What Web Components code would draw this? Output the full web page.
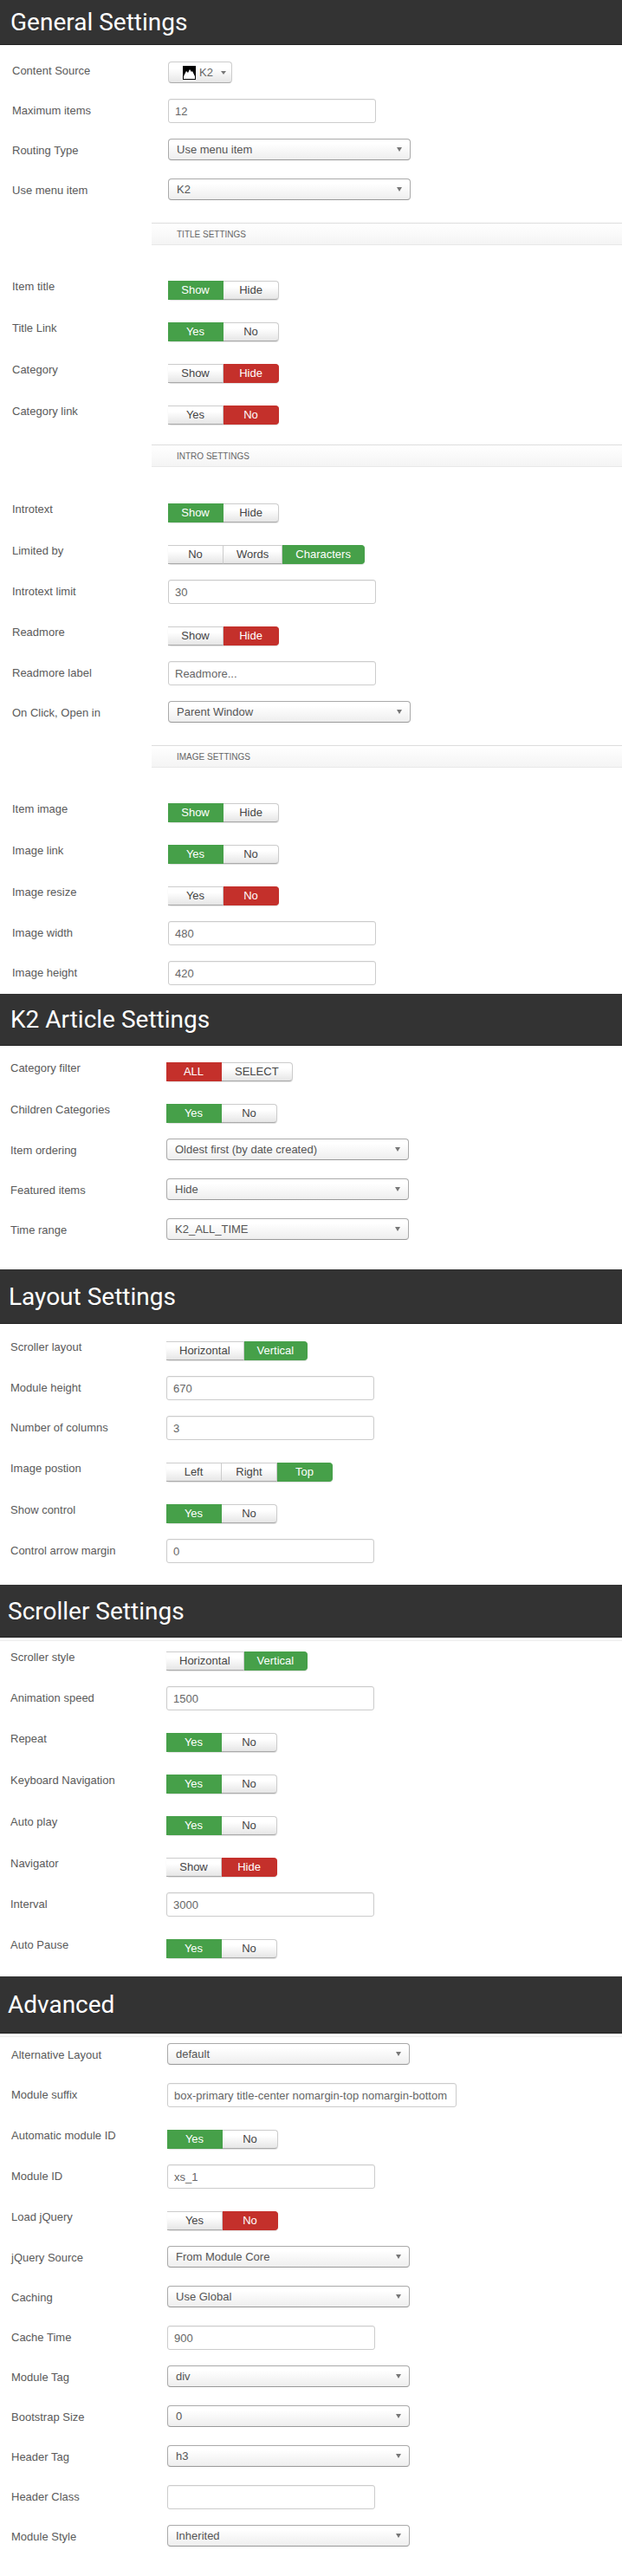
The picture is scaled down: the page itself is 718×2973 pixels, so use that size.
<!DOCTYPE html>
<html>
<head>
<meta charset="utf-8">
<title>Module settings</title>
<style>
  html, body { margin: 0; background: #fff; }
  body { font-family: "Liberation Sans", Arial, sans-serif; font-size: 13px; color: #555; width: 718px; height: 2973px; overflow: hidden; }
</style>
</head>
<body>

<settings-section heading="General Settings" bar="52" inset="14" title-x="12">
  <form-row label="Content Source" gap="19" kind="picker"><source-picker>K2</source-picker></form-row>
  <form-row label="Maximum items" gap="18" kind="field"><text-field>12</text-field></form-row>
  <form-row label="Routing Type" gap="18" kind="select"><select-box>Use menu item</select-box></form-row>
  <form-row label="Use menu item" gap="21" kind="select"><select-box>K2</select-box></form-row>
  <group-band gap="26">TITLE SETTINGS</group-band>
  <form-row label="Item title" gap="41" kind="toggle"><seg-toggle options="Show|Hide" on="0" tone="green"></seg-toggle></form-row>
  <form-row label="Title Link" gap="26" kind="toggle"><seg-toggle options="Yes|No" on="0" tone="green"></seg-toggle></form-row>
  <form-row label="Category" gap="26" kind="toggle"><seg-toggle options="Show|Hide" on="1" tone="red"></seg-toggle></form-row>
  <form-row label="Category link" gap="26" kind="toggle"><seg-toggle options="Yes|No" on="1" tone="red"></seg-toggle></form-row>
  <group-band gap="23">INTRO SETTINGS</group-band>
  <form-row label="Introtext" gap="42" kind="toggle"><seg-toggle options="Show|Hide" on="0" tone="green"></seg-toggle></form-row>
  <form-row label="Limited by" gap="26" kind="toggle"><seg-toggle options="No|Words|Characters" on="2" tone="green"></seg-toggle></form-row>
  <form-row label="Introtext limit" gap="18" kind="field"><text-field>30</text-field></form-row>
  <form-row label="Readmore" gap="26" kind="toggle"><seg-toggle options="Show|Hide" on="1" tone="red"></seg-toggle></form-row>
  <form-row label="Readmore label" gap="18" kind="field"><text-field>Readmore...</text-field></form-row>
  <form-row label="On Click, Open in" gap="18" kind="select"><select-box>Parent Window</select-box></form-row>
  <group-band gap="26">IMAGE SETTINGS</group-band>
  <form-row label="Item image" gap="41" kind="toggle"><seg-toggle options="Show|Hide" on="0" tone="green"></seg-toggle></form-row>
  <form-row label="Image link" gap="26" kind="toggle"><seg-toggle options="Yes|No" on="0" tone="green"></seg-toggle></form-row>
  <form-row label="Image resize" gap="26" kind="toggle"><seg-toggle options="Yes|No" on="1" tone="red"></seg-toggle></form-row>
  <form-row label="Image width" gap="18" kind="field"><text-field>480</text-field></form-row>
  <form-row label="Image height" gap="18" kind="field"><text-field>420</text-field></form-row>
</settings-section>

<settings-section heading="K2 Article Settings" bar="60" inset="12" title-x="12" top="10">
  <form-row label="Category filter" gap="19" kind="toggle"><seg-toggle options="ALL|SELECT" on="0" tone="red"></seg-toggle></form-row>
  <form-row label="Children Categories" gap="26" kind="toggle"><seg-toggle options="Yes|No" on="0" tone="green"></seg-toggle></form-row>
  <form-row label="Item ordering" gap="18" kind="select"><select-box>Oldest first (by date created)</select-box></form-row>
  <form-row label="Featured items" gap="21" kind="select"><select-box>Hide</select-box></form-row>
  <form-row label="Time range" gap="21" kind="select"><select-box>K2_ALL_TIME</select-box></form-row>
</settings-section>

<settings-section heading="Layout Settings" bar="63" inset="12" title-x="10" top="34">
  <form-row label="Scroller layout" gap="20" kind="toggle"><seg-toggle options="Horizontal|Vertical" on="1" tone="green"></seg-toggle></form-row>
  <form-row label="Module height" gap="18" kind="field"><text-field>670</text-field></form-row>
  <form-row label="Number of columns" gap="18" kind="field"><text-field>3</text-field></form-row>
  <form-row label="Image postion" gap="26" kind="toggle"><seg-toggle options="Left|Right|Top" on="2" tone="green"></seg-toggle></form-row>
  <form-row label="Show control" gap="26" kind="toggle"><seg-toggle options="Yes|No" on="0" tone="green"></seg-toggle></form-row>
  <form-row label="Control arrow margin" gap="18" kind="field"><text-field>0</text-field></form-row>
</settings-section>

<settings-section heading="Scroller Settings" bar="61" inset="12" title-x="9" top="25" rule>
  <form-row label="Scroller style" gap="16" kind="toggle"><seg-toggle options="Horizontal|Vertical" on="1" tone="green"></seg-toggle></form-row>
  <form-row label="Animation speed" gap="18" kind="field"><text-field>1500</text-field></form-row>
  <form-row label="Repeat" gap="26" kind="toggle"><seg-toggle options="Yes|No" on="0" tone="green"></seg-toggle></form-row>
  <form-row label="Keyboard Navigation" gap="26" kind="toggle"><seg-toggle options="Yes|No" on="0" tone="green"></seg-toggle></form-row>
  <form-row label="Auto play" gap="26" kind="toggle"><seg-toggle options="Yes|No" on="0" tone="green"></seg-toggle></form-row>
  <form-row label="Navigator" gap="26" kind="toggle"><seg-toggle options="Show|Hide" on="1" tone="red"></seg-toggle></form-row>
  <form-row label="Interval" gap="18" kind="field"><text-field>3000</text-field></form-row>
  <form-row label="Auto Pause" gap="26" kind="toggle"><seg-toggle options="Yes|No" on="0" tone="green"></seg-toggle></form-row>
</settings-section>

<settings-section heading="Advanced" bar="66" inset="13" title-x="9" top="21" rule>
  <form-row label="Alternative Layout" gap="11" kind="select"><select-box>default</select-box></form-row>
  <form-row label="Module suffix" gap="21" kind="field"><text-field wide>box-primary title-center nomargin-top nomargin-bottom</text-field></form-row>
  <form-row label="Automatic module ID" gap="26" kind="toggle"><seg-toggle options="Yes|No" on="0" tone="green"></seg-toggle></form-row>
  <form-row label="Module ID" gap="18" kind="field"><text-field>xs_1</text-field></form-row>
  <form-row label="Load jQuery" gap="26" kind="toggle"><seg-toggle options="Yes|No" on="1" tone="red"></seg-toggle></form-row>
  <form-row label="jQuery Source" gap="18" kind="select"><select-box>From Module Core</select-box></form-row>
  <form-row label="Caching" gap="21" kind="select"><select-box>Use Global</select-box></form-row>
  <form-row label="Cache Time" gap="21" kind="field"><text-field>900</text-field></form-row>
  <form-row label="Module Tag" gap="18" kind="select"><select-box>div</select-box></form-row>
  <form-row label="Bootstrap Size" gap="21" kind="select"><select-box>0</select-box></form-row>
  <form-row label="Header Tag" gap="21" kind="select"><select-box>h3</select-box></form-row>
  <form-row label="Header Class" gap="21" kind="field"><text-field></text-field></form-row>
  <form-row label="Module Style" gap="18" kind="select"><select-box>Inherited</select-box></form-row>
</settings-section>

<script>
const BUTTON_FACE = "linear-gradient(#fff 30%, #e6e6e6)";

class SettingsSection extends HTMLElement {
  constructor() {
    super();
    this.attachShadow({ mode: "open" });
    const top = this.getAttribute("top") || 0;
    const bar = this.getAttribute("bar");
    const inset = this.getAttribute("inset");
    const titleX = this.getAttribute("title-x");
    this.shadowRoot.innerHTML = `
      <style>
        :host { display: block; padding-top: ${top}px; }
        header {
          display: flex;
          align-items: center;
          box-sizing: border-box;
          height: ${bar}px;
          padding-left: ${titleX}px;
          background: #333;
          border-bottom: 1px solid #222;
          color: #fff;
          font: 400 28px Roboto, "Liberation Sans", sans-serif;
        }
        :host([rule]) header { box-shadow: 0 3px 0 #fff, 0 4px 0 #ececec; }
        main { display: flex; flex-direction: column; padding-left: ${inset}px; }
      </style>
      <header>${this.getAttribute("heading")}</header>
      <main><slot></slot></main>
    `;
  }
}

class FormRow extends HTMLElement {
  constructor() {
    super();
    this.attachShadow({ mode: "open" });
    const offsets = { toggle: 0, field: 7, select: 7, picker: 4 };
    const offset = offsets[this.getAttribute("kind")];
    this.shadowRoot.innerHTML = `
      <style>
        :host { display: flex; align-items: flex-start; margin-top: ${this.getAttribute("gap")}px; }
        label {
          flex: 0 0 180px;
          padding-top: ${offset}px;
          font-size: 13px;
          line-height: 14px;
          color: #5a5a5a;
        }
      </style>
      <label>${this.getAttribute("label")}</label>
      <slot></slot>
    `;
  }
}

class GroupBand extends HTMLElement {
  constructor() {
    super();
    this.attachShadow({ mode: "open" });
    this.shadowRoot.innerHTML = `
      <style>
        :host {
          display: flex;
          align-items: center;
          box-sizing: border-box;
          height: 26px;
          margin: ${this.getAttribute("gap")}px 0 0 161px;
          padding-left: 29px;
          background: linear-gradient(#fff, #f4f4f4);
          border-top: 1px solid #ddd;
          border-bottom: 1px solid #e8e8e8;
          font-size: 10px;
          color: #666;
        }
      </style>
      <slot></slot>
    `;
  }
}

class SegToggle extends HTMLElement {
  constructor() {
    super();
    this.attachShadow({ mode: "open" });
    const on = Number(this.getAttribute("on"));
    const tone = this.getAttribute("tone") === "red" ? "#c4302b" : "#46a049";
    const parts = this.getAttribute("options").split("|").map((text, i) =>
      `<span class="${i === on ? "on" : ""}">${text}</span>`
    );
    this.shadowRoot.innerHTML = `
      <style>
        :host {
          display: inline-flex;
          height: 22px;
          border-radius: 4px;
          box-shadow: 0 1px 1px rgba(0, 0, 0, 0.12);
          font-size: 13px;
        }
        span {
          box-sizing: border-box;
          min-width: 64px;
          padding: 0 15px;
          line-height: 20px;
          text-align: center;
          color: #444;
          background: ${BUTTON_FACE};
          border: 1px solid #ccc;
          border-bottom-color: #aaa;
          border-left-width: 0;
        }
        span:first-child { border-left-width: 1px; border-radius: 4px 0 0 4px; }
        span:last-child { border-radius: 0 4px 4px 0; }
        span.on { background: ${tone}; border-color: ${tone}; color: #fff; }
      </style>
      ${parts.join("")}
    `;
  }
}

class TextField extends HTMLElement {
  constructor() {
    super();
    this.attachShadow({ mode: "open" });
    this.shadowRoot.innerHTML = `
      <style>
        :host {
          display: flex;
          align-items: center;
          box-sizing: border-box;
          width: 240px;
          height: 28px;
          padding-left: 7px;
          background: #fff;
          border: 1px solid #ccc;
          border-radius: 3px;
          box-shadow: inset 0 1px 1px rgba(0, 0, 0, 0.05);
          font-size: 13px;
          color: #666;
        }
        :host([wide]) { width: 334px; }
      </style>
      <slot></slot>
    `;
  }
}

class SelectBox extends HTMLElement {
  constructor() {
    super();
    this.attachShadow({ mode: "open" });
    this.shadowRoot.innerHTML = `
      <style>
        :host {
          display: flex;
          align-items: center;
          justify-content: space-between;
          box-sizing: border-box;
          width: 280px;
          height: 25px;
          padding: 0 9px;
          background: linear-gradient(#fff 20%, #eee);
          border: 1px solid #aaa;
          border-bottom-color: #999;
          border-radius: 4px;
          font-size: 13px;
          color: #555;
        }
        i { border: 3px solid transparent; border-top: 5px solid #777; border-bottom: 0; }
      </style>
      <span><slot></slot></span>
      <i></i>
    `;
  }
}

class SourcePicker extends HTMLElement {
  constructor() {
    super();
    this.attachShadow({ mode: "open" });
    this.shadowRoot.innerHTML = `
      <style>
        :host {
          display: flex;
          align-items: center;
          gap: 4px;
          box-sizing: border-box;
          width: 74px;
          height: 25px;
          padding-left: 16px;
          background: ${BUTTON_FACE};
          border: 1px solid #ccc;
          border-bottom-color: #aaa;
          border-radius: 4px;
          font-size: 13px;
          color: #666;
        }
        i { margin-left: 5px; border: 3px solid transparent; border-top: 4px solid #777; border-bottom: 0; }
      </style>
      <svg width="15" height="16" viewBox="0 0 15 16">
        <rect width="15" height="16" fill="#000"/>
        <path d="M1 15 L1 12 L4 6 L6 8 L8 4 L10 7 L11 6 L14 12 L14 15 Z" fill="#fff"/>
      </svg>
      <span><slot></slot></span>
      <i></i>
    `;
  }
}

customElements.define("settings-section", SettingsSection);
customElements.define("form-row", FormRow);
customElements.define("group-band", GroupBand);
customElements.define("seg-toggle", SegToggle);
customElements.define("text-field", TextField);
customElements.define("select-box", SelectBox);
customElements.define("source-picker", SourcePicker);
</script>
</body>
</html>
